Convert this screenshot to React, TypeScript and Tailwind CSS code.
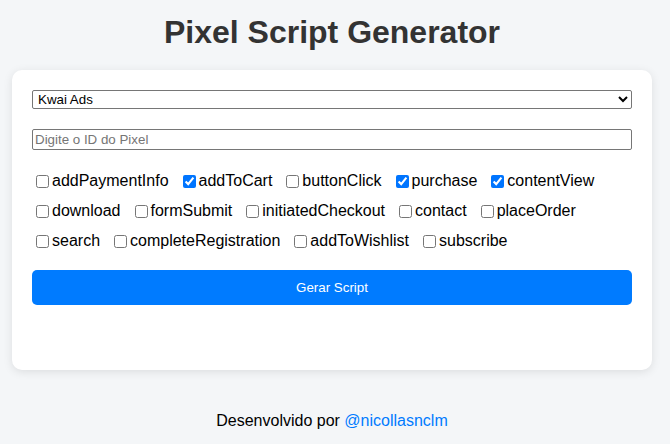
import React from "react";

const events = [
  { name: "addPaymentInfo", checked: false },
  { name: "addToCart", checked: true },
  { name: "buttonClick", checked: false },
  { name: "purchase", checked: true },
  { name: "contentView", checked: true },
  { name: "download", checked: false },
  { name: "formSubmit", checked: false },
  { name: "initiatedCheckout", checked: false },
  { name: "contact", checked: false },
  { name: "placeOrder", checked: false },
  { name: "search", checked: false },
  { name: "completeRegistration", checked: false },
  { name: "addToWishlist", checked: false },
  { name: "subscribe", checked: false },
];

export default function App() {
  return (
    <div className="min-h-[444px] bg-[#f4f6f8] font-['Liberation_Sans',Arial,sans-serif] text-[#333]">
      <div className="w-[664px]">
        <h1 className="pt-[14px] pb-[19px] text-center text-[32px] font-bold leading-[37px]">Pixel Script Generator</h1>

        <div className="mx-[12px] h-[300px] rounded-[10px] bg-white p-[20px] shadow-[0_2px_10px_rgba(0,0,0,0.1)]">
          <select
            defaultValue="kwai"
            className="block h-[19px] w-full rounded-[2px] border border-[#767676] bg-white px-[1px] text-[13.33px] text-black"
          >
            <option value="kwai">Kwai Ads</option>
            <option value="meta">Meta Ads</option>
            <option value="tiktok">TikTok Ads</option>
          </select>

          <input
            type="text"
            placeholder="Digite o ID do Pixel"
            className="mt-[20px] block h-[21px] w-full rounded-[2px] border border-[#767676] px-[2px] text-[13.33px] text-black placeholder:text-[#757575]"
          />

          <div className="mt-[22px] flex flex-wrap gap-x-[10px] gap-y-[12px] text-[16px] leading-[18px] text-black">
            {events.map((e) => (
              <label key={e.name} className="flex items-center">
                <input type="checkbox" defaultChecked={e.checked} className="ml-[4px] mr-[3px] h-[13px] w-[13px]" />
                {e.name}
              </label>
            ))}
          </div>

          <button className="mt-[20px] block h-[35px] w-full rounded-[5px] bg-[#007bff] text-[13.33px] text-white">
            Gerar Script
          </button>
        </div>

        <p className="mt-[42px] text-center text-[16px] leading-[18px] text-black">
          Desenvolvido por <a className="text-[#007bff]">@nicollasnclm</a>
        </p>
      </div>
    </div>
  );
}
